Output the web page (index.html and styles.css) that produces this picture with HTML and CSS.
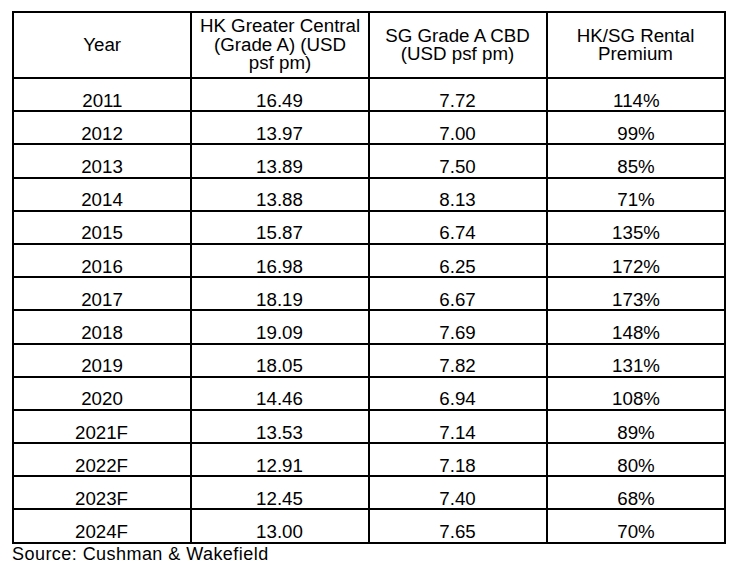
FILE: index.html
```html
<!DOCTYPE html>
<html>
<head>
<meta charset="utf-8">
<link rel="stylesheet" href="styles.css">
</head>
<body>
<div class="wrap">
<table class="rent">
  <colgroup><col class="c"><col class="c"><col class="c"><col class="c"></colgroup>
  <thead>
    <tr>
      <th><span class="t">Year</span></th>
      <th><span class="t">HK Greater Central<br>(Grade A) (USD<br>psf pm)</span></th>
      <th><span class="t">SG Grade A CBD<br>(USD psf pm)</span></th>
      <th><span class="t">HK/SG Rental<br>Premium</span></th>
    </tr>
  </thead>
  <tbody>
    <tr><td><span class="t">2011</span></td><td><span class="t">16.49</span></td><td><span class="t">7.72</span></td><td><span class="t">114%</span></td></tr>
    <tr><td><span class="t">2012</span></td><td><span class="t">13.97</span></td><td><span class="t">7.00</span></td><td><span class="t">99%</span></td></tr>
    <tr><td><span class="t">2013</span></td><td><span class="t">13.89</span></td><td><span class="t">7.50</span></td><td><span class="t">85%</span></td></tr>
    <tr><td><span class="t">2014</span></td><td><span class="t">13.88</span></td><td><span class="t">8.13</span></td><td><span class="t">71%</span></td></tr>
    <tr><td><span class="t">2015</span></td><td><span class="t">15.87</span></td><td><span class="t">6.74</span></td><td><span class="t">135%</span></td></tr>
    <tr><td><span class="t">2016</span></td><td><span class="t">16.98</span></td><td><span class="t">6.25</span></td><td><span class="t">172%</span></td></tr>
    <tr><td><span class="t">2017</span></td><td><span class="t">18.19</span></td><td><span class="t">6.67</span></td><td><span class="t">173%</span></td></tr>
    <tr><td><span class="t">2018</span></td><td><span class="t">19.09</span></td><td><span class="t">7.69</span></td><td><span class="t">148%</span></td></tr>
    <tr><td><span class="t">2019</span></td><td><span class="t">18.05</span></td><td><span class="t">7.82</span></td><td><span class="t">131%</span></td></tr>
    <tr><td><span class="t">2020</span></td><td><span class="t">14.46</span></td><td><span class="t">6.94</span></td><td><span class="t">108%</span></td></tr>
    <tr><td><span class="t">2021F</span></td><td><span class="t">13.53</span></td><td><span class="t">7.14</span></td><td><span class="t">89%</span></td></tr>
    <tr><td><span class="t">2022F</span></td><td><span class="t">12.91</span></td><td><span class="t">7.18</span></td><td><span class="t">80%</span></td></tr>
    <tr><td><span class="t">2023F</span></td><td><span class="t">12.45</span></td><td><span class="t">7.40</span></td><td><span class="t">68%</span></td></tr>
    <tr><td><span class="t">2024F</span></td><td><span class="t">13.00</span></td><td><span class="t">7.65</span></td><td><span class="t">70%</span></td></tr>
  </tbody>
</table>
<p class="source">Source: Cushman &amp; Wakefield</p>
</div>
</body>
</html>
```

FILE: styles.css
```css
html, body {
  margin: 0;
  padding: 0;
  background: #ffffff;
}
body {
  font-family: "Liberation Sans", Arial, sans-serif;
  font-size: 18px;
  color: #000000;
}
.wrap {
  padding: 11px 0 0 12px;
}
.rent {
  border-collapse: collapse;
  table-layout: fixed;
  width: 714px;
}
.rent .c {
  width: 178px;
}
.rent th,
.rent td {
  border: 2px solid #000000;
  padding: 0;
  text-align: center;
  font-weight: normal;
  line-height: 18.5px;
}
.rent th {
  height: 64px;
  vertical-align: middle;
}
.rent td {
  height: 31.2px;
  vertical-align: bottom;
  padding-bottom: 0;
}
.t {
  display: inline-block;
  transform: scaleX(1.04);
}
.source {
  margin: 0;
  padding-top: 1px;
  line-height: 18px;
  letter-spacing: 0.45px;
}
```
